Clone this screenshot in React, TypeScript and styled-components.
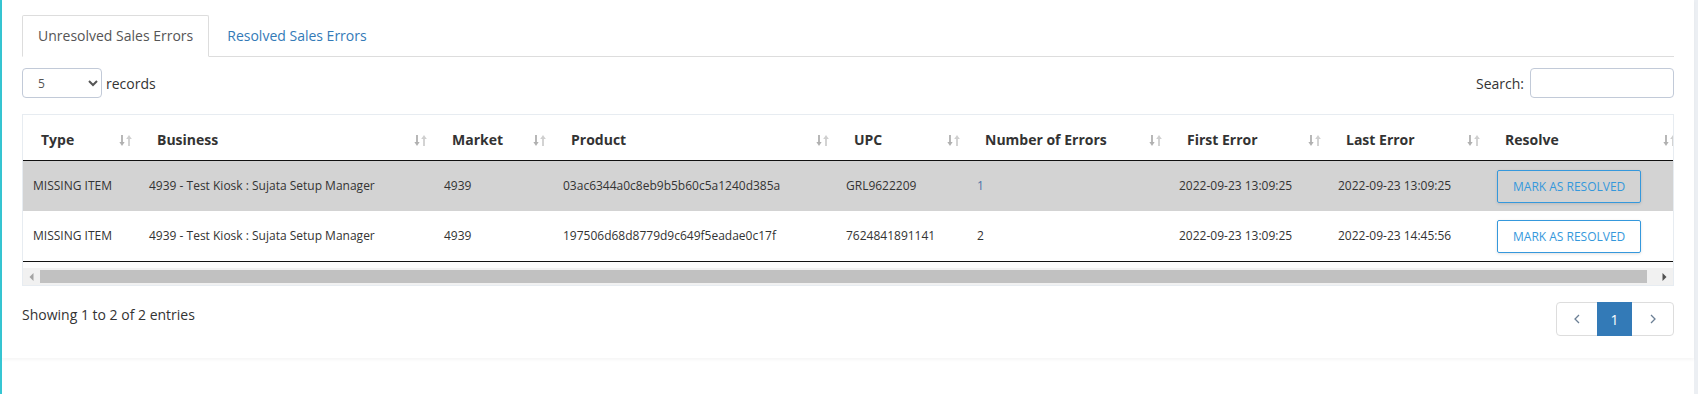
import React from 'react';
import styled, { createGlobalStyle } from 'styled-components';

const GlobalStyle = createGlobalStyle`
  html, body {
    margin: 0;
    padding: 0;
    background: #fff;
  }
  body {
    font-family: 'Open Sans', 'Liberation Sans', sans-serif;
    font-size: 14px;
    color: #333;
  }
  * {
    box-sizing: border-box;
  }
`;

const Page = styled.div`
  display: flex;
  min-height: 394px;
  border-left: 2px solid #36c6d3;
  border-right: 4px solid #eceff3;
`;

const Panel = styled.div`
  flex: 1;
  min-width: 0;
  align-self: flex-start;
  padding: 15px 20px 22px;
  background: #fff;
  box-shadow: 0 2px 3px rgba(0, 0, 0, 0.04);
`;

const TabList = styled.ul`
  display: flex;
  margin: 0;
  padding: 0;
  list-style: none;
  border-bottom: 1px solid #ddd;
`;

const Tab = styled.li<{ $active?: boolean }>`
  margin-right: 2px;
  margin-bottom: -1px;
  padding: 10px 15px;
  line-height: 20px;
  font-size: 14px;
  cursor: pointer;
  border: 1px solid ${(p) => (p.$active ? '#ddd' : 'transparent')};
  border-bottom-color: ${(p) => (p.$active ? '#fff' : 'transparent')};
  border-radius: 2px 2px 0 0;
  background: ${(p) => (p.$active ? '#fff' : 'transparent')};
  color: ${(p) => (p.$active ? '#555' : '#337ab7')};
`;

const Toolbar = styled.div`
  display: flex;
  align-items: center;
  justify-content: space-between;
  height: 30px;
  margin-top: 11px;
`;

const LengthControl = styled.label`
  display: flex;
  align-items: center;
  gap: 4px;
  font-size: 14px;
  color: #333;
`;

const Select = styled.select`
  width: 80px;
  height: 30px;
  padding: 0 4px 0 11px;
  border: 1px solid #c2cad8;
  border-radius: 4px;
  background: #fff;
  font-family: inherit;
  font-size: 12px;
  color: #555;
  outline: none;
`;

const SearchControl = styled.label`
  display: flex;
  align-items: center;
  gap: 6px;
  font-size: 14px;
  color: #333;
`;

const SearchInput = styled.input`
  width: 144px;
  height: 30px;
  border: 1px solid #c2cad8;
  border-radius: 4px;
  padding: 0 8px;
  font-family: inherit;
  font-size: 14px;
  outline: none;
`;

const TableBox = styled.div`
  margin-top: 16px;
  border: 1px solid #e7ecf1;
  background: #fcfcfc;
  overflow: hidden;
`;

const Table = styled.table`
  width: 1660px;
  table-layout: fixed;
  border-collapse: separate;
  border-spacing: 0;
  background: #fff;
`;

const HeadCell = styled.th`
  padding: 15px 7px 10px 18px;
  line-height: 20px;
  font-size: 14px;
  font-weight: 700;
  color: #333;
  text-align: left;
  border-bottom: 1px solid #111;
  white-space: nowrap;
`;

const HeadInner = styled.div`
  display: flex;
  align-items: center;
  justify-content: space-between;
`;

const Row = styled.tr<{ $shade?: boolean; $last?: boolean }>`
  background: ${(p) => (p.$shade ? '#d3d3d3' : '#fff')};
  & > td {
    height: ${(p) => (p.$last ? '51px' : '50px')};
    border-bottom: ${(p) => (p.$last ? '1px solid #111' : 'none')};
  }
`;

const Cell = styled.td<{ $tone?: string }>`
  padding: 0 10px;
  font-size: 12px;
  line-height: 18px;
  color: ${(p) => p.$tone || '#333'};
  white-space: nowrap;
`;

const MarkButton = styled.button`
  padding: 7px 15px;
  font-family: inherit;
  font-size: 12px;
  line-height: 17px;
  text-transform: uppercase;
  color: #3598dc;
  background: transparent;
  border: 1px solid #3598dc;
  border-radius: 2px;
  box-shadow: 0 1px 3px rgba(0, 0, 0, 0.12);
  cursor: pointer;
`;

const Scrollbar = styled.div`
  display: flex;
  height: 17px;
  margin-top: 6px;
  background: #f1f1f1;
`;

const ScrollArrow = styled.div`
  display: flex;
  align-items: center;
  justify-content: center;
  width: 17px;
  flex: none;
`;

const ScrollTrack = styled.div`
  flex: 1;
  display: flex;
  padding: 2px 9px 2px 0;
`;

const ScrollThumb = styled.div`
  flex: 1;
  background: #c1c1c1;
`;

const Footer = styled.div`
  display: flex;
  align-items: flex-start;
  justify-content: space-between;
  margin-top: 16px;
`;

const Info = styled.div`
  padding-top: 3px;
  font-size: 14px;
  line-height: 20px;
  color: #333;
`;

const Pager = styled.ul`
  display: flex;
  margin: 0;
  padding: 0;
  list-style: none;
`;

const PageLink = styled.li<{ $active?: boolean; $w: number; $pos?: 'first' | 'last' }>`
  display: flex;
  align-items: center;
  justify-content: center;
  width: ${(p) => p.$w}px;
  height: 34px;
  margin-left: ${(p) => (p.$pos === 'first' ? '0' : '-1px')};
  border: 1px solid ${(p) => (p.$active ? '#337ab7' : '#ddd')};
  border-radius: ${(p) =>
    p.$pos === 'first' ? '4px 0 0 4px' : p.$pos === 'last' ? '0 4px 4px 0' : '0'};
  background: ${(p) => (p.$active ? '#337ab7' : '#fff')};
  color: ${(p) => (p.$active ? '#fff' : '#6b7f95')};
  font-size: 14px;
  position: relative;
  z-index: ${(p) => (p.$active ? 1 : 0)};
`;

const SortIcon = () => (
  <svg width="13" height="13" viewBox="0 0 13 13">
    <path d="M3 1v8" stroke="#b0b0b0" strokeWidth="1.8" />
    <path d="M0.4 8h5.2L3 12z" fill="#b0b0b0" />
    <path d="M10 12V4" stroke="#cfcfcf" strokeWidth="1.8" />
    <path d="M7.2 5h5.6L10 1z" fill="#cfcfcf" />
  </svg>
);

const Chevron = ({ dir }: { dir: 'left' | 'right' }) => (
  <svg width="6" height="10" viewBox="0 0 6 10">
    <path
      d={dir === 'left' ? 'M5 1L1 5l4 4' : 'M1 1l4 4-4 4'}
      fill="none"
      stroke="currentColor"
      strokeWidth="1.3"
    />
  </svg>
);

const Triangle = ({ dir, color }: { dir: 'left' | 'right'; color: string }) => (
  <svg width="5" height="8" viewBox="0 0 5 8">
    <path d={dir === 'left' ? 'M4.5 0v8L0.5 4z' : 'M0.5 0v8L4.5 4z'} fill={color} />
  </svg>
);

const columns = [
  { label: 'Type', width: 116 },
  { label: 'Business', width: 295 },
  { label: 'Market', width: 119 },
  { label: 'Product', width: 283 },
  { label: 'UPC', width: 131 },
  { label: 'Number of Errors', width: 202 },
  { label: 'First Error', width: 159 },
  { label: 'Last Error', width: 159 },
  { label: 'Resolve', width: 196 },
];

const rows = [
  {
    type: 'MISSING ITEM',
    business: '4939 - Test Kiosk : Sujata Setup Manager',
    market: '4939',
    product: '03ac6344a0c8eb9b5b60c5a1240d385a',
    upc: 'GRL9622209',
    count: '1',
    first: '2022-09-23 13:09:25',
    last: '2022-09-23 13:09:25',
  },
  {
    type: 'MISSING ITEM',
    business: '4939 - Test Kiosk : Sujata Setup Manager',
    market: '4939',
    product: '197506d68d8779d9c649f5eadae0c17f',
    upc: '7624841891141',
    count: '2',
    first: '2022-09-23 13:09:25',
    last: '2022-09-23 14:45:56',
  },
];

export default function App() {
  const [tab, setTab] = React.useState(0);
  const [length, setLength] = React.useState('5');
  const [search, setSearch] = React.useState('');

  return (
    <>
      <GlobalStyle />
      <Page>
        <Panel>
          <TabList>
            <Tab $active={tab === 0} onClick={() => setTab(0)}>
              Unresolved Sales Errors
            </Tab>
            <Tab $active={tab === 1} onClick={() => setTab(1)}>
              Resolved Sales Errors
            </Tab>
          </TabList>

          <Toolbar>
            <LengthControl>
              <Select value={length} onChange={(e) => setLength(e.target.value)}>
                <option value="5">5</option>
                <option value="10">10</option>
                <option value="25">25</option>
                <option value="50">50</option>
              </Select>
              records
            </LengthControl>
            <SearchControl>
              Search:
              <SearchInput value={search} onChange={(e) => setSearch(e.target.value)} />
            </SearchControl>
          </Toolbar>

          <TableBox>
            <Table>
              <colgroup>
                {columns.map((c) => (
                  <col key={c.label} style={{ width: c.width }} />
                ))}
              </colgroup>
              <thead>
                <tr>
                  {columns.map((c) => (
                    <HeadCell key={c.label}>
                      <HeadInner>
                        <span>{c.label}</span>
                        <SortIcon />
                      </HeadInner>
                    </HeadCell>
                  ))}
                </tr>
              </thead>
              <tbody>
                {rows.map((r, i) => (
                  <Row key={r.product} $shade={i === 0} $last={i === rows.length - 1}>
                    <Cell>{r.type}</Cell>
                    <Cell>{r.business}</Cell>
                    <Cell>{r.market}</Cell>
                    <Cell>{r.product}</Cell>
                    <Cell>{r.upc}</Cell>
                    <Cell $tone={i === 0 ? '#4f74a8' : undefined}>{r.count}</Cell>
                    <Cell>{r.first}</Cell>
                    <Cell>{r.last}</Cell>
                    <Cell>
                      <MarkButton>Mark as resolved</MarkButton>
                    </Cell>
                  </Row>
                ))}
              </tbody>
            </Table>
            <Scrollbar>
              <ScrollArrow>
                <Triangle dir="left" color="#a3a3a3" />
              </ScrollArrow>
              <ScrollTrack>
                <ScrollThumb />
              </ScrollTrack>
              <ScrollArrow>
                <Triangle dir="right" color="#505050" />
              </ScrollArrow>
            </Scrollbar>
          </TableBox>

          <Footer>
            <Info>Showing 1 to 2 of 2 entries</Info>
            <Pager>
              <PageLink $w={42} $pos="first">
                <Chevron dir="left" />
              </PageLink>
              <PageLink $w={35} $active>
                1
              </PageLink>
              <PageLink $w={43} $pos="last">
                <Chevron dir="right" />
              </PageLink>
            </Pager>
          </Footer>
        </Panel>
      </Page>
    </>
  );
}
